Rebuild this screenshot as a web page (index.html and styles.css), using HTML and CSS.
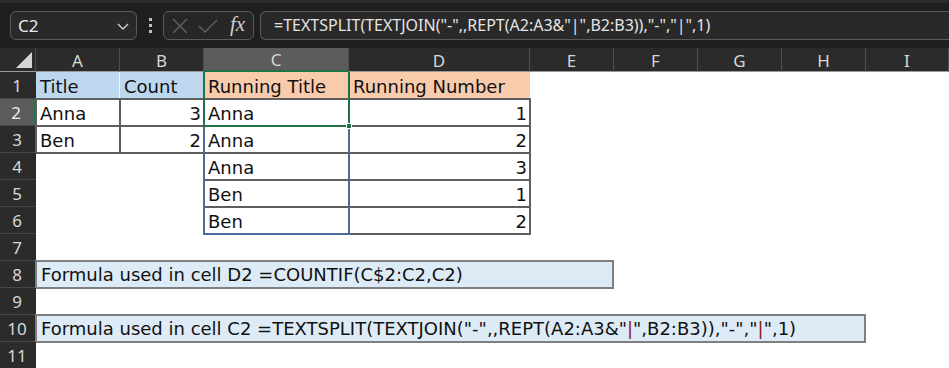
FILE: index.html
```html
<!DOCTYPE html>
<html lang="en">
<head>
<meta charset="UTF-8">
<title>TEXTSPLIT running title</title>
<link rel="stylesheet" href="styles.css">
</head>
<body>

<div class="topbar">
  <div class="namebox">
    <span>C2</span>
    <svg class="chev" width="12" height="7" viewBox="0 0 12 7"><path d="M1 1 L6 6 L11 1" fill="none" stroke="#cfcfcf" stroke-width="1.4"/></svg>
  </div>
  <div class="grip"><i></i><i></i><i></i></div>
  <div class="fxbox">
    <svg width="16" height="16" viewBox="0 0 16 16"><path d="M1 1 L15 15 M15 1 L1 15" stroke="#5f5f5f" stroke-width="1.5"/></svg>
    <svg width="20" height="16" viewBox="0 0 20 16"><path d="M1 8 L7 14 L19 2" fill="none" stroke="#5f5f5f" stroke-width="1.5"/></svg>
    <span class="fx">fx</span>
  </div>
  <div class="formula">=TEXTSPLIT(TEXTJOIN("-",,REPT(A2:A3&amp;"|",B2:B3)),"-","|",1)</div>
</div>

<div class="sheet">
  <!-- column headers -->
  <div class="corner"><span class="tri"></span></div>
  <div class="colh">A</div>
  <div class="colh">B</div>
  <div class="colh sel">C</div>
  <div class="colh">D</div>
  <div class="colh">E</div>
  <div class="colh">F</div>
  <div class="colh">G</div>
  <div class="colh">H</div>
  <div class="colh">I</div>

  <!-- row 1 -->
  <div class="rowh">1</div>
  <div class="c blue sep">Title</div>
  <div class="c blue">Count</div>
  <div class="c peach">Running Title</div>
  <div class="c peach">Running Number</div>
  <div class="c"></div><div class="c"></div><div class="c"></div><div class="c"></div><div class="c"></div>

  <!-- row 2 -->
  <div class="rowh sel">2</div>
  <div class="c bx">Anna</div>
  <div class="c bx num">3</div>
  <div class="c bx">Anna</div>
  <div class="c bx num">1</div>
  <div class="c"></div><div class="c"></div><div class="c"></div><div class="c"></div><div class="c"></div>

  <!-- row 3 -->
  <div class="rowh">3</div>
  <div class="c bx">Ben</div>
  <div class="c bx num">2</div>
  <div class="c bx">Anna</div>
  <div class="c bx num">2</div>
  <div class="c"></div><div class="c"></div><div class="c"></div><div class="c"></div><div class="c"></div>

  <!-- row 4 -->
  <div class="rowh">4</div>
  <div class="c"></div>
  <div class="c"></div>
  <div class="c bx">Anna</div>
  <div class="c bx num">3</div>
  <div class="c"></div><div class="c"></div><div class="c"></div><div class="c"></div><div class="c"></div>

  <!-- row 5 -->
  <div class="rowh">5</div>
  <div class="c"></div>
  <div class="c"></div>
  <div class="c bx">Ben</div>
  <div class="c bx num">1</div>
  <div class="c"></div><div class="c"></div><div class="c"></div><div class="c"></div><div class="c"></div>

  <!-- row 6 -->
  <div class="rowh">6</div>
  <div class="c"></div>
  <div class="c"></div>
  <div class="c bx">Ben</div>
  <div class="c bx num">2</div>
  <div class="c"></div><div class="c"></div><div class="c"></div><div class="c"></div><div class="c"></div>

  <div class="rowh r7">7</div>
  <div class="rowh r8">8</div>
  <div class="note n8">Formula used in cell D2 =COUNTIF(C$2:C2,C2)</div>
  <div class="rowh r9">9</div>
  <div class="rowh r10">10</div>
  <div class="note n10">Formula used in cell C2 =TEXTSPLIT(TEXTJOIN("-",,REPT(A2:A3&amp;"<span class="bar">|</span>",B2:B3)),"-","<span class="bar">|</span>",1)</div>
  <div class="rowh r11">11</div>

  <!-- spill range and active cell, drawn over the cells -->
  <div class="spill"></div>
  <div class="active"><span class="handle"></span></div>
</div>

</body>
</html>
```

FILE: styles.css
```css
* {
  box-sizing: border-box;
}

body {
  margin: 0;
  width: 949px;
  height: 368px;
  overflow: hidden;
  background: #fff;
  font-family: "DejaVu Sans", "Noto Sans", sans-serif;
}

.topbar {
  height: 48px;
  background: #1f1f1f;
  border-top: 3px solid #2a2a2a;
  display: flex;
  align-items: center;
  padding: 0 0 0 10px;
  font-family: "Noto Sans", sans-serif;
}

.namebox {
  width: 127px;
  height: 29px;
  border: 1px solid #5a5a5a;
  border-radius: 6px;
  background: #292929;
  color: #e8e8e8;
  font-size: 17px;
  display: flex;
  align-items: center;
  justify-content: space-between;
  padding: 0 7px 0 7px;
}

.chev {
  margin-top: 1px;
}

.grip {
  width: 26px;
  display: flex;
  flex-direction: column;
  align-items: center;
  gap: 3px;
}

.grip i {
  width: 3px;
  height: 3px;
  background: #bdbdbd;
}

.fxbox {
  width: 91px;
  height: 29px;
  border: 1px solid #5a5a5a;
  border-radius: 6px;
  background: #262626;
  display: flex;
  align-items: center;
  gap: 10px;
  padding: 0 0 0 8px;
}

.fx {
  font-family: "Liberation Serif", serif;
  font-style: italic;
  font-size: 21px;
  color: #cfcfcf;
  margin-left: 2px;
  margin-top: -3px;
}

.formula {
  flex: 1;
  margin-left: 6px;
  height: 29px;
  border: 1px solid #5a5a5a;
  border-right: none;
  border-radius: 6px 0 0 6px;
  background: #292929;
  color: #e4e4e4;
  font-size: 16px;
  padding-left: 13px;
  line-height: 27px;
  white-space: nowrap;
  overflow: hidden;
}

.sheet {
  position: relative;
  display: grid;
  grid-template-columns: 36px 84px 84px 145px 181px 84px 84px 84px 84px 83px;
  grid-template-rows: 24px repeat(11, 27px);
  font-size: 18px;
  color: #111;
}

.corner,
.colh,
.rowh {
  background: #2b2b2b;
  color: #d8d8d8;
  font-family: "Noto Sans", sans-serif;
  font-size: 17px;
}

.corner {
  position: relative;
  border-bottom: 1px solid #9c9c9c;
  border-right: 1px solid #4a4a4a;
}

.corner .tri {
  position: absolute;
  right: 3px;
  bottom: 3px;
  width: 0;
  height: 0;
  border-left: 16px solid transparent;
  border-bottom: 16px solid #d4d4d4;
}

.colh {
  border-right: 1px solid #4f4f4f;
  border-bottom: 1px solid #9c9c9c;
  display: flex;
  align-items: center;
  justify-content: center;
  padding-top: 1px;
}

.colh.sel {
  background: #5c5c5c;
  border-bottom: 2px solid #1f7244;
}

.rowh {
  grid-column: 1;
  border-bottom: 1px solid #464646;
  display: flex;
  align-items: center;
  justify-content: center;
  padding-right: 2px;
}

.rowh.sel {
  background: #5c5c5c;
  border-right: 2px solid #1f7244;
  color: #f0f0f0;
}

.c {
  display: flex;
  align-items: center;
  padding: 1px 4px 0 4px;
  white-space: nowrap;
  overflow: visible;
}

.c.num {
  justify-content: flex-end;
  padding-right: 3px;
}

.c.blue {
  background: #bdd7ee;
}

.c.sep {
  box-shadow: inset -1px 0 #f4f8fc;
}

.c.peach {
  background: #f8cbad;
}

.c.bx {
  outline: 2px solid #5e5e5e;
  outline-offset: -1px;
}

.r7 { grid-row: 8; }
.r8 { grid-row: 9; }
.r9 { grid-row: 10; }
.r10 { grid-row: 11; }
.r11 { grid-row: 12; }

.note {
  background: #ddebf7;
  border: 2px solid #7f7f7f;
  margin: -1px 0 -1px -1px;
  display: flex;
  align-items: center;
  padding: 0 0 0 4px;
  white-space: nowrap;
}

.n8 {
  grid-row: 9;
  grid-column: 2 / 7;
}

.n10 {
  grid-row: 11;
  grid-column: 2 / 10;
}

.bar {
  color: #8a1d1d;
}

/* absolutely placed grid children: they sit on their grid area without taking a slot */
.spill {
  position: absolute;
  grid-row: 3 / 8;
  grid-column: 4 / 5;
  top: 0;
  bottom: -1px;
  left: -1px;
  right: -1px;
  border: 2px solid #4a6c98;
  border-top: none;
  pointer-events: none;
}

.active {
  position: absolute;
  grid-row: 2 / 4;
  grid-column: 4 / 5;
  top: 0;
  bottom: -1px;
  left: -1px;
  right: -1px;
  border: 2px solid #1f7244;
  border-top: none;
  pointer-events: none;
}

.active .handle {
  position: absolute;
  right: -4px;
  bottom: -4px;
  width: 6px;
  height: 6px;
  background: #1f7244;
  border: 1px solid #fff;
}
```
